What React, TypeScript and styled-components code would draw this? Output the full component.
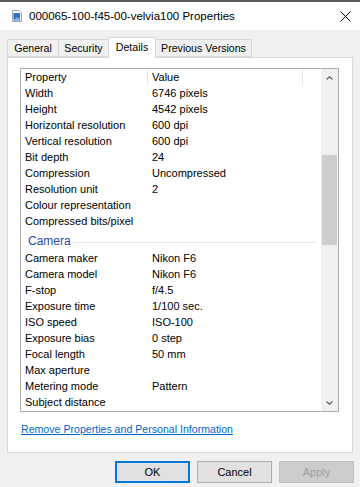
import React, { FC } from 'react';
import styled, { createGlobalStyle } from 'styled-components';

const GlobalStyle = createGlobalStyle`
  html, body {
    margin: 0;
    padding: 0;
    background: #f0f0f0;
  }
  * {
    box-sizing: border-box;
  }
`;

/** Window */
const Window = styled.div`
  width: 360px;
  height: 487px;
  display: flex;
  flex-direction: column;
  background: #f0f0f0;
  font-family: 'Liberation Sans', Arial, sans-serif;
  font-size: 11px;
  color: #000;
  overflow: hidden;
  border-top: 2px solid #5a5a5a;
`;

/** Title bar */
const TitleBar = styled.div`
  height: 28px;
  display: flex;
  align-items: center;
  background: #fff;
  padding-left: 12px;
  padding-right: 9px;
`;

const TitleText = styled.span`
  flex: 1;
  margin-left: 7px;
  font-size: 11.5px;
  color: #000;
`;

const CloseButton = styled.div`
  width: 12px;
  height: 12px;
  display: flex;
  align-items: center;
  justify-content: center;
`;

/** Tabs */
const TabStrip = styled.div`
  display: flex;
  align-items: flex-end;
  padding: 6px 0 0 8px;
  height: 27px;
  position: relative;
  z-index: 1;
`;

const Tab = styled.div<{ $active?: boolean; $width: number }>`
  width: ${(p) => p.$width}px;
  height: ${(p) => (p.$active ? '21px' : '18px')};
  display: flex;
  align-items: center;
  justify-content: center;
  font-size: 10.6px;
  margin-bottom: ${(p) => (p.$active ? '-1px' : '0')};
  background: ${(p) => (p.$active ? '#fff' : '#f0f0f0')};
  border: 1px solid #d9d9d9;
  border-bottom: ${(p) => (p.$active ? 'none' : '1px solid #d9d9d9')};
  margin-left: -1px;
  padding-bottom: ${(p) => (p.$active ? '3px' : '0')};
`;

/** Panel */
const Panel = styled.div`
  margin: 0 7px;
  height: 396px;
  background: #fff;
  border: 1px solid #d9d9d9;
  display: flex;
  flex-direction: column;
  padding: 10px 0 0 12px;
`;

const ListBox = styled.div`
  width: 319px;
  height: 344px;
  border: 1px solid #adadad;
  display: flex;
  overflow: hidden;
`;

const ListBody = styled.div`
  flex: 1;
  overflow: hidden;
`;

const HeaderRow = styled.div`
  display: grid;
  grid-template-columns: 127px 155px 1fr;
  height: 16px;
  align-items: center;
`;

const HeaderCell = styled.div<{ $last?: boolean }>`
  height: 100%;
  display: flex;
  align-items: center;
  padding-left: 4px;
  border-right: ${(p) => (p.$last ? 'none' : '1px solid #e5e5e5')};
`;

const Row = styled.div`
  display: grid;
  grid-template-columns: 127px 1fr;
  height: 16px;
  align-items: center;
`;

const Cell = styled.div`
  padding-left: 4px;
  white-space: nowrap;
`;

const GroupRow = styled.div`
  display: flex;
  align-items: center;
  height: 21px;
  padding: 3px 0 0 7px;
  gap: 2px;
`;

const GroupTitle = styled.span`
  color: #2a4aa8;
  font-size: 12px;
`;

const GroupLine = styled.div`
  flex: 1;
  height: 1px;
  background: #e5e5e5;
  margin: 3px 5px 0 0;
`;

/** Scrollbar */
const ScrollBar = styled.div`
  width: 17px;
  background: #f0f0f0;
  display: flex;
  flex-direction: column;
`;

const ScrollArrow = styled.div`
  height: 17px;
  display: flex;
  align-items: center;
  justify-content: center;
`;

const ScrollTrack = styled.div`
  flex: 1;
  padding-top: 69px;
`;

const ScrollThumb = styled.div`
  height: 90px;
  margin: 0 1px;
  background: #cdcdcd;
`;

/** Link */
const RemoveLink = styled.a`
  margin-top: 10px;
  margin-left: 1px;
  color: #0066cc;
  text-decoration: underline;
  font-size: 10.6px;
  line-height: 14px;
  cursor: pointer;
  align-self: flex-start;
`;

/** Buttons */
const ButtonRow = styled.div`
  display: flex;
  justify-content: flex-end;
  gap: 7px;
  padding: 8px 6px 0 0;
`;

const Button = styled.div<{ $default?: boolean; $disabled?: boolean }>`
  width: 75px;
  height: 22px;
  display: flex;
  align-items: center;
  justify-content: center;
  font-size: 11px;
  background: ${(p) => (p.$disabled ? '#cccccc' : '#e1e1e1')};
  color: ${(p) => (p.$disabled ? '#a0a0a0' : '#000')};
  border: 1px solid
    ${(p) => (p.$default ? '#0078d7' : p.$disabled ? '#bfbfbf' : '#adadad')};
  box-shadow: ${(p) => (p.$default ? 'inset 0 0 0 1px #0078d7' : 'none')};
`;

const FileIcon: FC = () => (
  <svg width="10" height="12" viewBox="0 0 10 12">
    <path d="M0.5 0.5h6.5l2.5 2.5v8.5h-9z" fill="#fff" stroke="#9aa3ad" />
    <rect x="1.5" y="3" width="6.5" height="7.5" fill="#2f6fc4" />
    <path d="M2 10l2.5-3 1.5 1.5 1.5-1.5v3z" fill="#7fb2ea" />
  </svg>
);

const CloseIcon: FC = () => (
  <svg width="11" height="11" viewBox="0 0 11 11">
    <path d="M0.5 0.5l10 10M10.5 0.5l-10 10" stroke="#000" strokeWidth="1" />
  </svg>
);

const Chevron: FC<{ up?: boolean }> = ({ up }) => (
  <svg width="7" height="4" viewBox="0 0 7 4">
    <path
      d={up ? 'M0.5 3.5L3.5 0.8L6.5 3.5' : 'M0.5 0.5L3.5 3.2L6.5 0.5'}
      stroke="#606060"
      strokeWidth="1.2"
      fill="none"
    />
  </svg>
);

const imageProps: [string, string][] = [
  ['Width', '6746 pixels'],
  ['Height', '4542 pixels'],
  ['Horizontal resolution', '600 dpi'],
  ['Vertical resolution', '600 dpi'],
  ['Bit depth', '24'],
  ['Compression', 'Uncompressed'],
  ['Resolution unit', '2'],
  ['Colour representation', ''],
  ['Compressed bits/pixel', ''],
];

const cameraProps: [string, string][] = [
  ['Camera maker', 'Nikon F6'],
  ['Camera model', 'Nikon F6'],
  ['F-stop', 'f/4.5'],
  ['Exposure time', '1/100 sec.'],
  ['ISO speed', 'ISO-100'],
  ['Exposure bias', '0 step'],
  ['Focal length', '50 mm'],
  ['Max aperture', ''],
  ['Metering mode', 'Pattern'],
  ['Subject distance', ''],
];

const tabs: [string, number][] = [
  ['General', 52],
  ['Security', 51],
  ['Details', 48],
  ['Previous Versions', 97],
];

const App: FC = () => {
  return (
    <>
      <GlobalStyle />
      <Window>
        <TitleBar>
          <FileIcon />
          <TitleText>000065-100-f45-00-velvia100 Properties</TitleText>
          <CloseButton>
            <CloseIcon />
          </CloseButton>
        </TitleBar>

        <TabStrip>
          {tabs.map(([t, w]) => (
            <Tab key={t} $width={w} $active={t === 'Details'}>
              {t}
            </Tab>
          ))}
        </TabStrip>

        <Panel>
          <ListBox>
            <ListBody>
              <HeaderRow>
                <HeaderCell>Property</HeaderCell>
                <HeaderCell>Value</HeaderCell>
                <HeaderCell $last />
              </HeaderRow>
              {imageProps.map(([k, v]) => (
                <Row key={k}>
                  <Cell>{k}</Cell>
                  <Cell>{v}</Cell>
                </Row>
              ))}
              <GroupRow>
                <GroupTitle>Camera</GroupTitle>
                <GroupLine />
              </GroupRow>
              {cameraProps.map(([k, v]) => (
                <Row key={k}>
                  <Cell>{k}</Cell>
                  <Cell>{v}</Cell>
                </Row>
              ))}
            </ListBody>
            <ScrollBar>
              <ScrollArrow>
                <Chevron up />
              </ScrollArrow>
              <ScrollTrack>
                <ScrollThumb />
              </ScrollTrack>
              <ScrollArrow>
                <Chevron />
              </ScrollArrow>
            </ScrollBar>
          </ListBox>
          <RemoveLink>Remove Properties and Personal Information</RemoveLink>
        </Panel>

        <ButtonRow>
          <Button $default>OK</Button>
          <Button>Cancel</Button>
          <Button $disabled>Apply</Button>
        </ButtonRow>
      </Window>
    </>
  );
};

export default App;
